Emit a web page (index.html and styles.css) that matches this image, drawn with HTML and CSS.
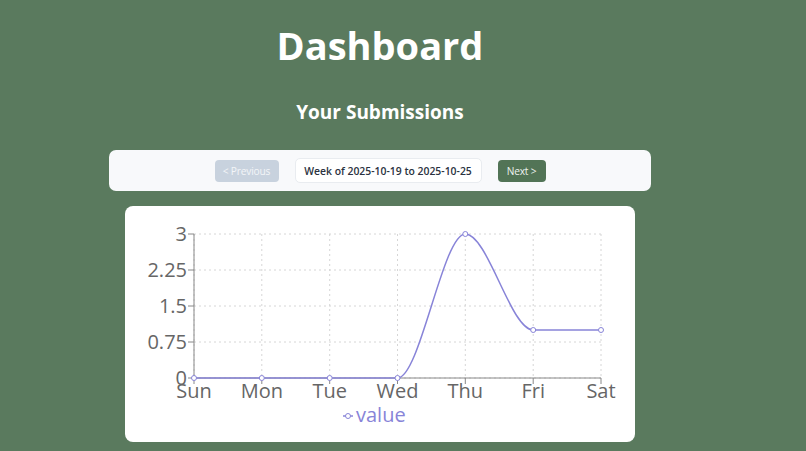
FILE: index.html
```html
<!DOCTYPE html>
<html lang="en">
<head>
<meta charset="utf-8">
<title>Dashboard</title>
<link rel="stylesheet" href="styles.css">
</head>
<body>
<div class="page">
  <h1 class="title">Dashboard</h1>
  <h2 class="subtitle">Your Submissions</h2>
  <div class="nav">
    <button class="btn btn-prev" disabled>&lt; Previous</button>
    <div class="week">Week of 2025-10-19 to 2025-10-25</div>
    <button class="btn btn-next">Next &gt;</button>
  </div>
  <div class="chart-card">
    <svg class="chart" viewBox="0 0 510 236" width="510" height="236">
      <g class="grid" stroke="#d6d6d6" stroke-dasharray="2 3" fill="none">
        <line x1="69" y1="28" x2="476" y2="28"/>
        <line x1="69" y1="64" x2="476" y2="64"/>
        <line x1="69" y1="100" x2="476" y2="100"/>
        <line x1="69" y1="136" x2="476" y2="136"/>
        <line x1="69" y1="172" x2="476" y2="172"/>
        <line x1="69" y1="28" x2="69" y2="172"/>
        <line x1="136.8" y1="28" x2="136.8" y2="172"/>
        <line x1="204.7" y1="28" x2="204.7" y2="172"/>
        <line x1="272.5" y1="28" x2="272.5" y2="172"/>
        <line x1="340.3" y1="28" x2="340.3" y2="172"/>
        <line x1="408.2" y1="28" x2="408.2" y2="172"/>
        <line x1="476" y1="28" x2="476" y2="172"/>
      </g>
      <g class="axis" stroke="#888" fill="none">
        <line x1="69" y1="28" x2="69" y2="172"/>
        <line x1="63" y1="28" x2="69" y2="28"/>
        <line x1="63" y1="64" x2="69" y2="64"/>
        <line x1="63" y1="100" x2="69" y2="100"/>
        <line x1="63" y1="136" x2="69" y2="136"/>
        <line x1="63" y1="172" x2="69" y2="172"/>
        <line x1="69" y1="172" x2="476" y2="172"/>
        <line x1="69" y1="172" x2="69" y2="178"/>
        <line x1="136.8" y1="172" x2="136.8" y2="178"/>
        <line x1="204.7" y1="172" x2="204.7" y2="178"/>
        <line x1="272.5" y1="172" x2="272.5" y2="178"/>
        <line x1="340.3" y1="172" x2="340.3" y2="178"/>
        <line x1="408.2" y1="172" x2="408.2" y2="178"/>
        <line x1="476" y1="172" x2="476" y2="178"/>
      </g>
      <g class="ylabels" text-anchor="end">
        <text x="62" y="35">3</text>
        <text x="62" y="71">2.25</text>
        <text x="62" y="107">1.5</text>
        <text x="62" y="143">0.75</text>
        <text x="62" y="179">0</text>
      </g>
      <g class="xlabels" text-anchor="middle">
        <text x="69" y="192">Sun</text>
        <text x="136.8" y="192">Mon</text>
        <text x="204.7" y="192">Tue</text>
        <text x="272.5" y="192">Wed</text>
        <text x="340.3" y="192">Thu</text>
        <text x="408.2" y="192">Fri</text>
        <text x="476" y="192">Sat</text>
      </g>
      <path class="line" d="M69,172 L272.5,172 C295.1,172 317.7,28 340.3,28 C362.9,28 385.6,124 408.2,124 L476,124" fill="none" stroke="#8884d8" stroke-width="1.5"/>
      <g class="dots" fill="#fff" stroke="#8884d8" stroke-width="1">
        <circle cx="69" cy="172" r="2.5"/>
        <circle cx="136.8" cy="172" r="2.5"/>
        <circle cx="204.7" cy="172" r="2.5"/>
        <circle cx="272.5" cy="172" r="2.5"/>
        <circle cx="340.3" cy="28" r="2.5"/>
        <circle cx="408.2" cy="124" r="2.5"/>
        <circle cx="476" cy="124" r="2.5"/>
      </g>
      <g class="legend">
        <line x1="218" y1="210" x2="228" y2="210" stroke="#8884d8" stroke-width="1.5"/>
        <circle cx="223" cy="210" r="2.5" fill="#fff" stroke="#8884d8" stroke-width="1"/>
        <text x="231" y="216">value</text>
      </g>
    </svg>
  </div>
</div>
</body>
</html>
```
FILE: styles.css
```css
* { box-sizing: border-box; }
html, body { margin: 0; padding: 0; }
body {
  background: #5a7a5e;
  font-family: "Open Sans", "Noto Sans", sans-serif;
  height: 451px;
  overflow: hidden;
}
.page {
  width: 760px;
  display: flex;
  flex-direction: column;
  align-items: center;
  padding-top: 20px;
}
.title {
  margin: 0;
  color: #fff;
  font-size: 38px;
  font-weight: 700;
  line-height: 50px;
}
.subtitle {
  margin: 29px 0 0 0;
  color: #fff;
  font-size: 19px;
  font-weight: 700;
  line-height: 26px;
}
.nav {
  margin-top: 25px;
  width: 542px;
  height: 41px;
  background: #f8f9fb;
  border-radius: 7px;
  display: flex;
  align-items: center;
  justify-content: center;
  gap: 16px;
}
.btn {
  border: none;
  border-radius: 4px;
  height: 22px;
  padding: 0;
  white-space: nowrap;
  font-family: "Open Sans", sans-serif;
  font-size: 10.2px;
  letter-spacing: -0.2px;
  color: #fff;
}
.btn-prev {
  width: 64px;
  background: #c8d2de;
  color: #f3f5f8;
}
.btn-next {
  width: 48px;
  background: #527456;
  color: #eef2ee;
}
.week {
  height: 25px;
  width: 187px;
  border: 1px solid #e9ecf0;
  border-radius: 5px;
  background: #fff;
  display: flex;
  align-items: center;
  justify-content: center;
  white-space: nowrap;
  font-size: 10.4px;
  font-weight: 600;
  color: #2a3240;
}
.chart-card {
  margin-top: 15px;
  width: 510px;
  height: 236px;
  background: #fff;
  border-radius: 8px;
}
.chart { display: block; }
.ylabels text, .xlabels text {
  font-family: "Open Sans", sans-serif;
  font-size: 20px;
  fill: #666;
}
.legend text {
  font-family: "Open Sans", sans-serif;
  font-size: 20px;
  fill: #8884d8;
}
```
